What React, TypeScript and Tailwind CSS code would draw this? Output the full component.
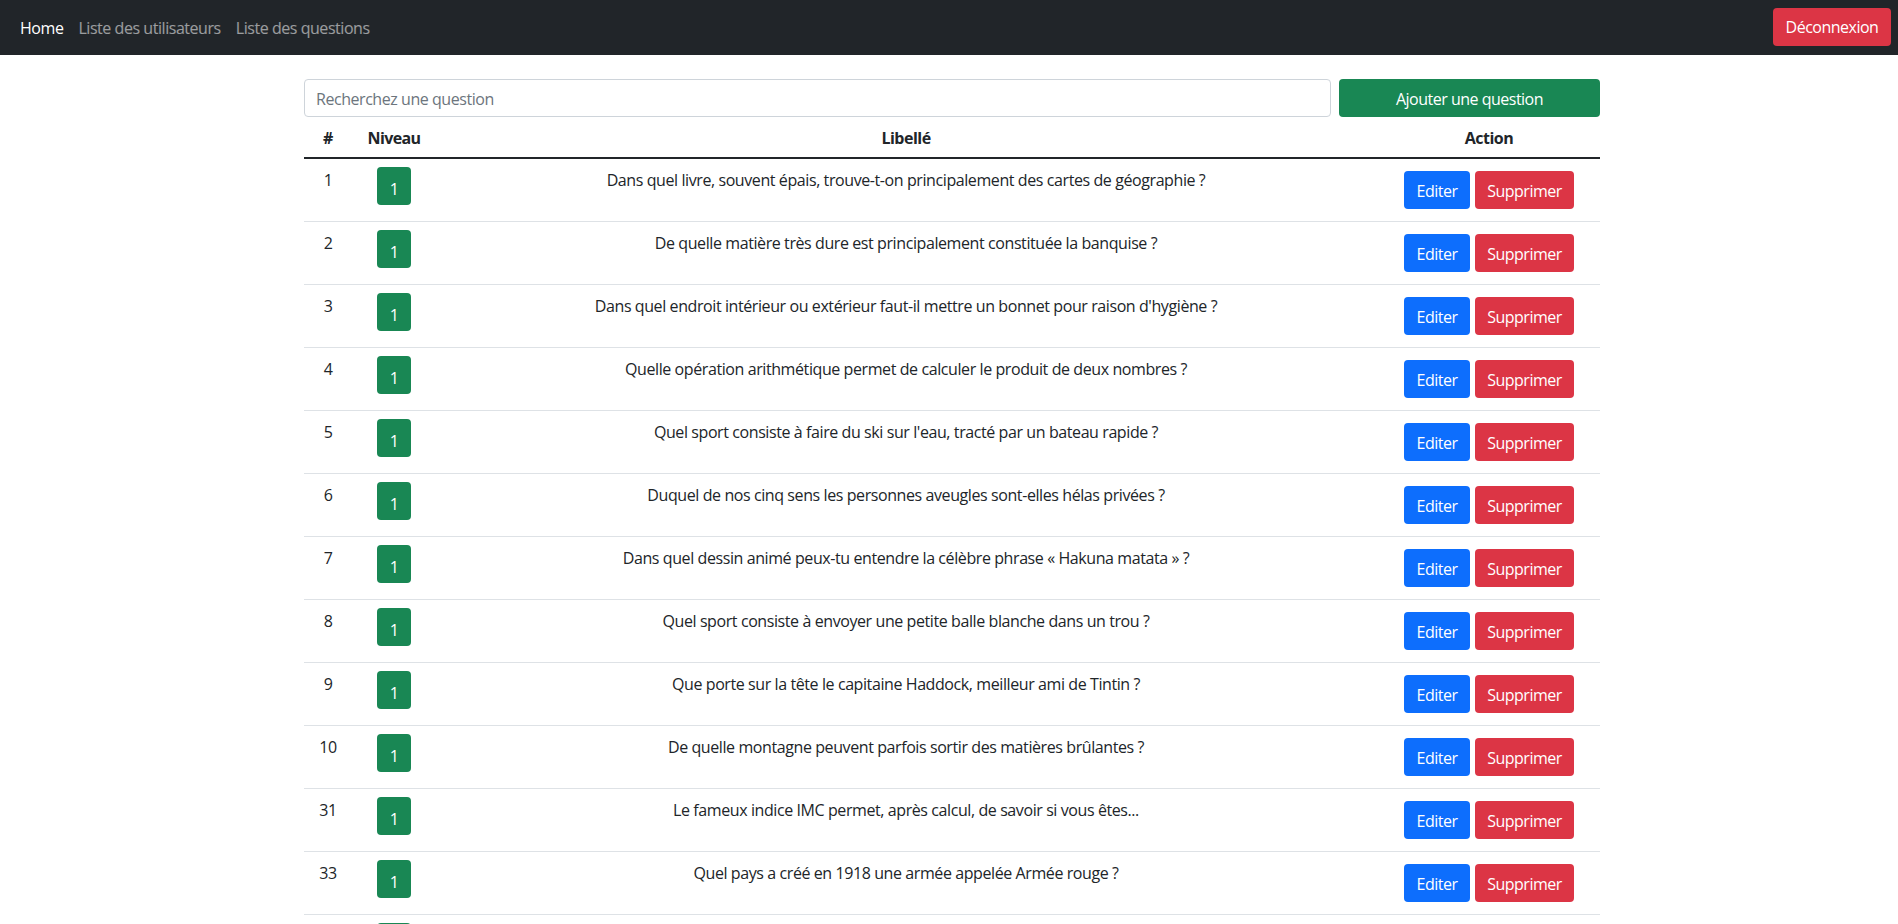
const font = "[font-family:'Open_Sans','Noto_Sans',sans-serif]";

const questions: [string, string][] = [
  ["1", "Dans quel livre, souvent épais, trouve-t-on principalement des cartes de géographie ?"],
  ["2", "De quelle matière très dure est principalement constituée la banquise ?"],
  ["3", "Dans quel endroit intérieur ou extérieur faut-il mettre un bonnet pour raison d'hygiène ?"],
  ["4", "Quelle opération arithmétique permet de calculer le produit de deux nombres ?"],
  ["5", "Quel sport consiste à faire du ski sur l'eau, tracté par un bateau rapide ?"],
  ["6", "Duquel de nos cinq sens les personnes aveugles sont-elles hélas privées ?"],
  ["7", "Dans quel dessin animé peux-tu entendre la célèbre phrase « Hakuna matata » ?"],
  ["8", "Quel sport consiste à envoyer une petite balle blanche dans un trou ?"],
  ["9", "Que porte sur la tête le capitaine Haddock, meilleur ami de Tintin ?"],
  ["10", "De quelle montagne peuvent parfois sortir des matières brûlantes ?"],
  ["31", "Le fameux indice IMC permet, après calcul, de savoir si vous êtes..."],
  ["33", "Quel pays a créé en 1918 une armée appelée Armée rouge ?"],
];

function Row({ id, text }: { id: string; text: string }) {
  return (
    <tr className="h-[63px] border-b border-[#dee2e6] align-top">
      <td className="px-2 pt-[9px] text-center">{id}</td>
      <td className="p-2">
        <span className="mx-auto flex h-[38px] w-[34px] items-end justify-center rounded bg-[#198754] pb-[4px] text-white">1</span>
      </td>
      <td className="px-2 pt-[9px] text-center tracking-[-0.41px]">{text}</td>
      <td className="py-2 pl-[9px] pr-[7px]">
        <div className="mt-1 flex justify-center gap-[5px]">
          <button className="h-[38px] w-[66px] rounded bg-[#0d6efd] pt-[2px] text-white">Editer</button>
          <button className="h-[38px] w-[99px] rounded bg-[#dc3545] pt-[2px] text-white">Supprimer</button>
        </div>
      </td>
    </tr>
  );
}

export default function App() {
  return (
    <div className={`h-screen overflow-hidden bg-white text-base tracking-[-0.5px] text-[#212529] ${font}`}>
      <nav className="flex h-[55px] items-center justify-between bg-[#212529] pl-5 pr-[7px]">
        <div className="flex gap-[15px] tracking-[-0.45px]">
          <a className="text-white">Home</a>
          <a className="text-white/55">Liste des utilisateurs</a>
          <a className="text-white/55">Liste des questions</a>
        </div>
        <button className="mb-[1px] h-[38px] w-[118px] rounded bg-[#dc3545] text-white">Déconnexion</button>
      </nav>
      <main className="ml-[304px] w-[1296px] pt-6">
        <div className="flex gap-2">
          <input
            className="h-[38px] w-[1027px] rounded border border-[#ced4da] pl-[11px] pr-3 pt-[2px] tracking-[-0.45px] placeholder:text-[#6c757d]"
            placeholder="Recherchez une question"
          />
          <button className="h-[38px] flex-1 rounded bg-[#198754] pt-[2px] text-white">Ajouter une question</button>
        </div>
        <table className="w-full table-fixed border-collapse">
          <colgroup>
            <col className="w-[48px]" />
            <col className="w-[84px]" />
            <col className="w-[940px]" />
            <col className="w-[224px]" />
          </colgroup>
          <thead>
            <tr className="h-[41px] border-b-2 border-[#212529]">
              <th className="px-2 pb-[7px] pt-[9px] text-center font-bold">#</th>
              <th className="px-2 pb-[7px] pt-[9px] text-center font-bold tracking-[-0.6px]">Niveau</th>
              <th className="px-2 pb-[7px] pt-[9px] text-center font-bold">Libellé</th>
              <th className="pb-[7px] pl-[9px] pr-[7px] pt-[9px] text-center font-bold">Action</th>
            </tr>
          </thead>
          <tbody>
            {questions.map(([id, text]) => (
              <Row key={id} id={id} text={text} />
            ))}
            <tr>
              <td />
              <td className="p-2">
                <span className="mx-auto block h-[38px] w-[34px] rounded bg-[#198754]" />
              </td>
              <td />
              <td />
            </tr>
          </tbody>
        </table>
      </main>
    </div>
  );
}
